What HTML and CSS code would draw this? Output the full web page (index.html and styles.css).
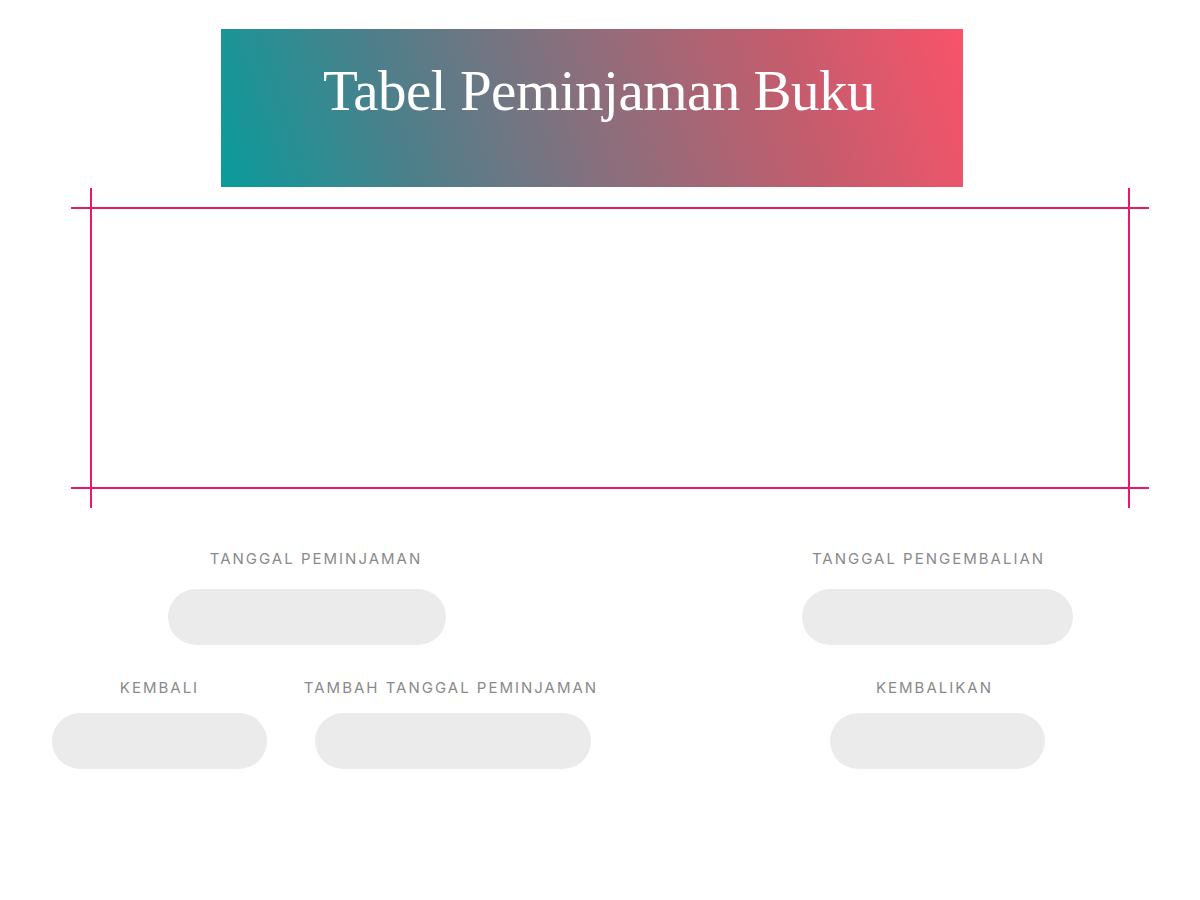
FILE: index.html
```html
<!DOCTYPE html>
<html lang="id">
<head>
<meta charset="utf-8">
<title>Tabel Peminjaman Buku</title>
<link rel="stylesheet" href="styles.css">
</head>
<body>
  <header class="banner">
    <h1 class="title">Tabel Peminjaman Buku</h1>
  </header>

  <section class="frame">
    <div class="frame-h"></div>
    <div class="frame-v"></div>
  </section>

  <section class="form">
    <div class="row row-top">
      <div class="field f-pinjam">
        <label class="label">Tanggal Peminjaman</label>
        <div class="pill"></div>
      </div>
      <div class="field f-kembali-tgl">
        <label class="label">Tanggal Pengembalian</label>
        <div class="pill"></div>
      </div>
    </div>
    <div class="row row-bottom">
      <div class="field f-kembali">
        <label class="label">Kembali</label>
        <div class="pill"></div>
      </div>
      <div class="field f-tambah">
        <label class="label">Tambah Tanggal Peminjaman</label>
        <div class="pill"></div>
      </div>
      <div class="field f-kembalikan">
        <label class="label">Kembalikan</label>
        <div class="pill"></div>
      </div>
    </div>
  </section>
</body>
</html>
```

FILE: styles.css
```css
* { box-sizing: border-box; }

html, body {
  margin: 0;
  padding: 0;
  background: #ffffff;
}

body {
  width: 1200px;
  height: 900px;
  overflow: hidden;
  font-family: "Inter", "Liberation Sans", sans-serif;
}

.banner {
  margin: 29px 0 0 221px;
  width: 742px;
  height: 158px;
  background: linear-gradient(72deg, #0a9c9c 0%, #4d7f8a 25%, #86707e 48%, #c15d6d 75%, #f9536a 100%);
  display: flex;
  justify-content: center;
  padding-top: 30px;
  padding-left: 14px;
}

.title {
  margin: 0;
  font-family: "Liberation Serif", "DejaVu Serif", serif;
  font-weight: normal;
  font-size: 57px;
  line-height: 64px;
  color: #ffffff;
  letter-spacing: -0.5px;
}

.frame {
  position: relative;
  margin: 1px 0 0 71px;
  width: 1078px;
  height: 320px;
}

.frame-h {
  position: absolute;
  left: 0;
  right: 0;
  top: 19px;
  bottom: 19px;
  border-top: 2px solid #e8186c;
  border-bottom: 2px solid #e8186c;
}

.frame-v {
  position: absolute;
  top: 0;
  bottom: 0;
  left: 19px;
  right: 19px;
  border-left: 2px solid #e8186c;
  border-right: 2px solid #e8186c;
}

.form {
  display: flex;
  flex-direction: column;
}

.row {
  display: flex;
  align-items: flex-start;
}

.row-top { margin-top: 42px; }
.row-bottom { margin-top: 34px; }

.field {
  display: flex;
  flex-direction: column;
  align-items: center;
}

.label {
  display: block;
  font-size: 15px;
  line-height: 18px;
  letter-spacing: 2px;
  text-transform: uppercase;
  color: #8a8a8a;
  white-space: nowrap;
}

.row-top .label { margin-bottom: 21px; }
.row-bottom .label { margin-bottom: 16px; }

.pill {
  height: 56px;
  border-radius: 28px;
  background: #ebebeb;
}

.f-pinjam { margin-left: 168px; width: 278px; }
.f-pinjam .label { margin-left: 18px; }
.f-pinjam .pill { width: 278px; }

.f-kembali-tgl { margin-left: 356px; width: 271px; }
.f-kembali-tgl .label { margin-right: 18px; }
.f-kembali-tgl .pill { width: 271px; }

.f-kembali { margin-left: 52px; width: 215px; }
.f-kembali .pill { width: 215px; }

.f-tambah { margin-left: 48px; width: 276px; }
.f-tambah .label { margin-right: 4px; }
.f-tambah .pill { width: 276px; }

.f-kembalikan { margin-left: 239px; width: 215px; }
.f-kembalikan .label { margin-right: 6px; }
.f-kembalikan .pill { width: 215px; }
```
